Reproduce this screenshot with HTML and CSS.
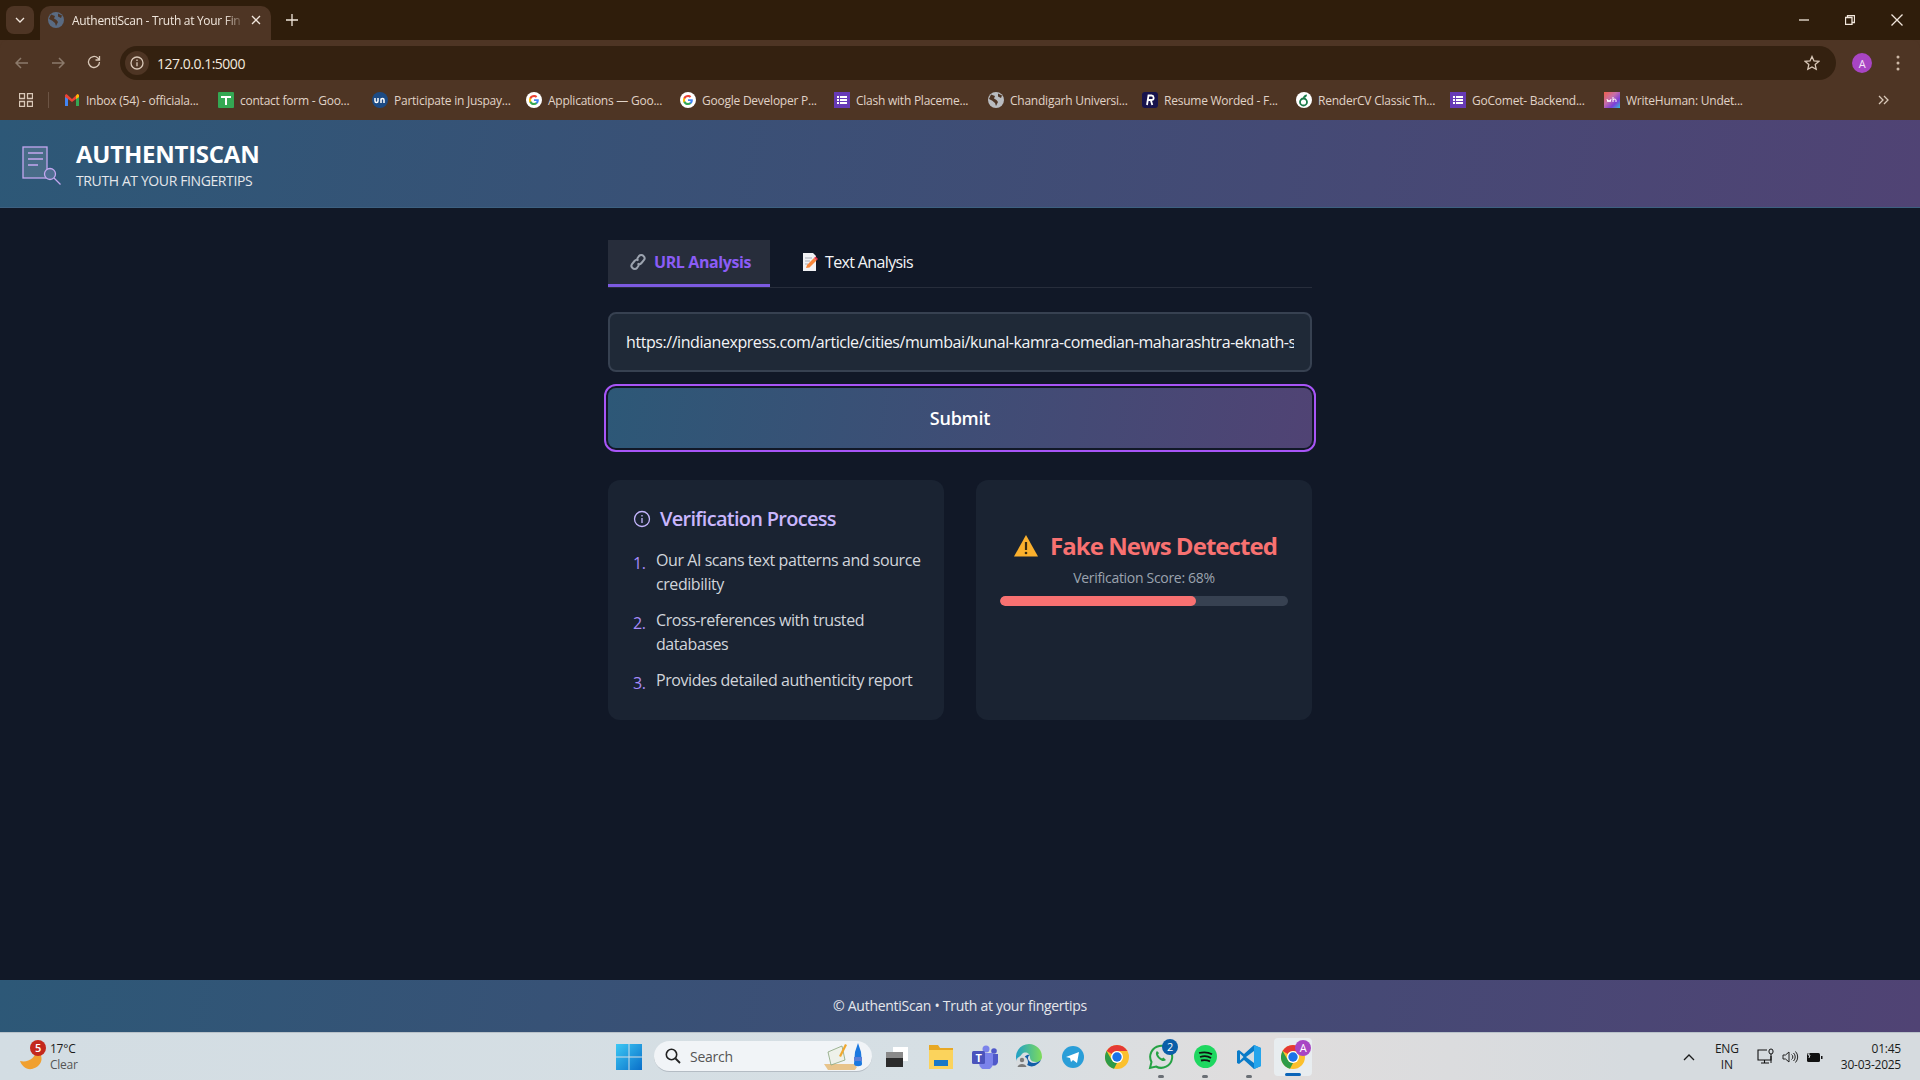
FILE: index.html
```html
<!DOCTYPE html>
<html lang="en">
<head>
<meta charset="utf-8">
<title>AuthentiScan - Truth at Your Fingertips</title>
<link rel="stylesheet" href="styles.css">
</head>
<body>
<svg class="defs" width="0" height="0" aria-hidden="true">
  <symbol id="globe" viewBox="0 0 16 16"><circle cx="8" cy="8" r="8" fill="currentColor"/><path d="M3 2.500 7 4 6 6.500 8.500 8l1.500 2-2 4-1-3L4 8.500 1 7zM10 1.500l4 2-1 2.500-3-1.500z" fill="var(--globe-cut)"/></symbol>
  <symbol id="gicon" viewBox="0 0 16 16"><circle cx="8" cy="8" r="8" fill="#fff"/><path d="M12.800 8.200c0-.4 0-.7-.1-1H8v1.900h2.700c-.1.600-.5 1.100-1 1.500v1.200h1.600c1-.9 1.500-2.200 1.500-3.600z" fill="#4285f4"/><path d="M8 13c1.300 0 2.400-.4 3.300-1.200l-1.600-1.200c-.4.300-1 .5-1.700.5-1.300 0-2.400-.9-2.800-2H3.500v1.300C4.300 12 6 13 8 13z" fill="#34a853"/><path d="M5.200 9.100c-.2-.7-.2-1.400 0-2.100V5.700H3.500c-.7 1.400-.7 3.100 0 4.700z" fill="#fbbc05"/><path d="M8 5c.7 0 1.400.3 1.900.7l1.400-1.400C10.400 3.500 9.300 3 8 3 6 3 4.300 4.100 3.500 5.700L5.200 7c.4-1.200 1.500-2 2.800-2z" fill="#ea4335"/></symbol>
  <symbol id="forms" viewBox="0 0 16 16"><rect width="16" height="20" fill="#673ab7"/><g fill="#fff"><rect x="3" y="4" width="2" height="2"/><rect x="6" y="4" width="7" height="2"/><rect x="3" y="7" width="2" height="2"/><rect x="6" y="7" width="7" height="2"/><rect x="3" y="10" width="2" height="2"/><rect x="6" y="10" width="7" height="2"/></g></symbol>
  <symbol id="chrome" viewBox="0 0 24 24"><circle cx="12" cy="12" r="12" fill="#fbc02d"/><path d="M12 0a12 12 0 0 1 10.400 6H12a6 6 0 0 0-5.200 3L1.600 6A12 12 0 0 1 12 0z" fill="#e53935"/><path d="M1.600 6l5.200 9a6 6 0 0 0 5.200 3l-3 5.700A12 12 0 0 1 1.600 6z" fill="#2e9b48"/><circle cx="12" cy="12" r="6" fill="#fff"/><circle cx="12" cy="12" r="4.700" fill="#1a73e8"/></symbol>
</svg>

<header class="tabstrip">
  <button class="tab-menu"><svg width="10" height="6" viewBox="0 0 10 6"><path d="M1 1l4 4 4-4" class="ln ln-w"/></svg></button>
  <div class="tab">
    <svg class="fav globe-dark" width="16" height="16"><use href="#globe"/></svg>
    <span class="tab-title">AuthentiScan - Truth at Your Fin</span>
    <svg class="tab-x" width="10" height="10" viewBox="0 0 10 10"><path d="M1 1l8 8M9 1l-8 8" class="ln ln-w"/></svg>
  </div>
  <svg class="new-tab" width="12" height="12" viewBox="0 0 12 12"><path d="M6 0v12M0 6h12" class="ln ln-w"/></svg>
  <div class="win-controls">
    <svg width="10" height="10" viewBox="0 0 10 10"><path d="M0 5h10" class="ln ln-w"/></svg>
    <svg width="10" height="10" viewBox="0 0 10 10"><path d="M.5 2.500h6.500v7H.5zM2.500 2.500V.5h7v7H7" class="ln ln-w"/></svg>
    <svg width="12" height="12" viewBox="0 0 12 12"><path d="M.5.5l11 11M11.500.5l-11 11" class="ln ln-w"/></svg>
  </div>
</header>

<div class="chrome-body">
  <nav class="toolbar">
    <svg class="nav-ic" width="14" height="12" viewBox="0 0 14 12"><path d="M13 6H1M6 1 1 6l5 5" class="ln ln-dim"/></svg>
    <svg class="nav-ic" width="14" height="12" viewBox="0 0 14 12"><path d="M1 6h12M8 1l5 5-5 5" class="ln ln-dim"/></svg>
    <svg class="nav-ic" width="14" height="14" viewBox="0 0 14 14"><path d="M12.500 7A5.500 5.500 0 1 1 10.800 3L12.500 4.500M12.500 1v4h-4" class="ln ln-b"/></svg>
    <div class="omnibox">
      <span class="site-info"><svg width="14" height="14" viewBox="0 0 14 14"><circle cx="7" cy="7" r="6" class="ln ln-b"/><path d="M7 6.200v4M7 3.500v1.500" class="ln ln-b"/></svg></span>
      <span class="url">127.0.0.1:5000</span>
      <svg class="star" width="16" height="16" viewBox="0 0 16 16"><path d="M8 1.500l2 4.400 4.800.5-3.600 3.200 1 4.700L8 11.900l-4.200 2.400 1-4.700L1.200 6.400 6 5.900z" class="ln ln-b"/></svg>
    </div>
    <span class="avatar">A</span>
    <svg class="kebab" width="4" height="16" viewBox="0 0 4 16"><circle cx="2" cy="2" r="1.500"/><circle cx="2" cy="8" r="1.500"/><circle cx="2" cy="14" r="1.500"/></svg>
  </nav>
  <nav class="bookmarks">
    <svg class="apps" width="14" height="14" viewBox="0 0 14 14"><path d="M.5.5h5v5h-5zM8.500.5h5v5h-5zM.5 8.500h5v5h-5zM8.500 8.500h5v5h-5z" class="ln ln-b"/></svg>
    <span class="bm-sep"></span>
    <a class="bm"><svg class="fav" width="16" height="16" viewBox="0 0 16 16"><path d="M1 3v11h3V7l4 3 4-3v7h3V3l-1.500-1L8 7 2.500 2z" fill="#ea4335"/><path d="M1 5v9h3V7z" fill="#4285f4"/><path d="M12 7v7h3V5z" fill="#34a853"/><path d="M15 3v2l-3 2V3.500l1.500-1.500z" fill="#fbbc04"/></svg><span>Inbox (54) - officiala...</span></a>
    <a class="bm"><svg class="fav" width="16" height="16" viewBox="0 0 16 16"><rect width="16" height="16" rx="1" fill="#34a853"/><path d="M3 5h10M8 5v8" stroke="#fff" stroke-width="2"/></svg><span>contact form - Goo...</span></a>
    <a class="bm"><svg class="fav" width="16" height="16" viewBox="0 0 16 16"><circle cx="8" cy="8" r="8" fill="#1d4b84"/><path d="M3 6v3a1.500 1.500 0 0 0 3 0V6M9 11V6.500M9 8a1.500 1.500 0 0 1 3 0v3" fill="none" stroke="#fff" stroke-width="1.500"/></svg><span>Participate in Juspay...</span></a>
    <a class="bm"><svg class="fav" width="16" height="16"><use href="#gicon"/></svg><span>Applications — Goo...</span></a>
    <a class="bm"><svg class="fav" width="16" height="16"><use href="#gicon"/></svg><span>Google Developer P...</span></a>
    <a class="bm"><svg class="fav" width="16" height="16" viewBox="0 0 16 16"><use href="#forms" width="16" height="16"/></svg><span>Clash with Placeme...</span></a>
    <a class="bm"><svg class="fav globe-light" width="16" height="16"><use href="#globe"/></svg><span>Chandigarh Universi...</span></a>
    <a class="bm"><svg class="fav" width="16" height="16" viewBox="0 0 16 16"><rect width="16" height="16" rx="3" fill="#17134d"/><path d="M5 13l1.500-9.500h3a2.300 2.300 0 0 1 .5 4.500H6.500M8.800 8l1.500 5" fill="none" stroke="#fff" stroke-width="1.800"/></svg><span>Resume Worded - F...</span></a>
    <a class="bm"><svg class="fav" width="16" height="16" viewBox="0 0 16 16"><circle cx="8" cy="8" r="8" fill="#fff"/><circle cx="7.500" cy="10" r="3.500" fill="none" stroke="#1b7b4a" stroke-width="1.800"/><path d="M7 6c0-2 2-3.500 4-3.500C11 5 9 6.500 7 6z" fill="#1b7b4a"/></svg><span>RenderCV Classic Th...</span></a>
    <a class="bm"><svg class="fav" width="16" height="16" viewBox="0 0 16 16"><use href="#forms" width="16" height="16"/></svg><span>GoComet- Backend...</span></a>
    <a class="bm"><svg class="fav" width="16" height="16" viewBox="0 0 16 16"><defs><linearGradient id="wh" x1="0" y1="0" x2="1" y2="1"><stop offset="0" stop-color="#f0604a"/><stop offset=".4" stop-color="#c76fa8"/><stop offset=".7" stop-color="#7c3fd8"/><stop offset="1" stop-color="#30c0d8"/></linearGradient></defs><rect width="16" height="16" fill="url(#wh)"/><path d="M3 7l1 3 1-2 1 2 1-3M9 5v5M9 8c1-1.500 3-1 3 0v2" fill="none" stroke="#fff"/></svg><span>WriteHuman: Undet...</span></a>
    <svg class="bm-more" width="12" height="10" viewBox="0 0 12 10"><path d="M1 1l4 4-4 4M6 1l4 4-4 4" class="ln ln-b"/></svg>
  </nav>
</div>

<div class="app-header">
  <svg class="logo" width="42" height="42" viewBox="0 0 42 42">
    <rect x="1" y="1" width="24" height="31" fill="#fff" fill-opacity=".13" stroke="#c4a7f0" stroke-width="1.300"/>
    <path d="M6 7h15M6 13h15M6 19h10" stroke="#c4a7f0" stroke-width="1.300" fill="none"/>
    <circle cx="28" cy="28" r="5.500" fill="#4f6f92" stroke="#c4a7f0" stroke-width="1.300"/>
    <path d="M32 32l6.500 6.500" stroke="#c4a7f0" stroke-width="1.300" fill="none"/>
  </svg>
  <div class="brand">
    <h1>AUTHENTISCAN</h1>
    <p>TRUTH AT YOUR FINGERTIPS</p>
  </div>
</div>

<main class="main">
  <div class="container">
    <div class="tabs">
      <button class="app-tab active">
        <svg width="18" height="18" viewBox="0 0 18 18"><g fill="none" stroke="#9ca3af" stroke-width="2"><path d="M8 6l2-3a3 3 0 0 1 4.500 0 3 3 0 0 1 .5 4l-2.500 3a3 3 0 0 1-4 .5"/><path d="M10 12l-2 3a3 3 0 0 1-4.500 0 3 3 0 0 1-.5-4l2.500-3a3 3 0 0 1 4-.5"/></g></svg>
        URL Analysis
      </button>
      <button class="app-tab">
        <svg width="16" height="18" viewBox="0 0 16 18"><path d="M1 0h10l3 3v15H1z" fill="#f1f1f4"/><path d="M3 5h7M3 8h5M3 11h3" stroke="#a9adb8" stroke-width="1"/><path d="M4 15l1-3 7-7 2.500 2.500-7 7z" fill="#f6863a"/><path d="M12 5l1.500-1.500L16 6l-1.500 1.500z" fill="#e8384f"/></svg>
        Text Analysis
      </button>
    </div>
    <input class="url-input" type="text" value="https://indianexpress.com/article/cities/mumbai/kunal-kamra-comedian-maharashtra-eknath-shinde-row-9910432/" readonly>
    <button class="submit">Submit</button>
    <div class="cards">
      <section class="card">
        <h2><svg width="18" height="18" viewBox="0 0 18 18"><circle cx="9" cy="9" r="7.500" fill="none" stroke="#c4b5fd" stroke-width="1.300"/><path d="M9 8v5M9 5v1.500" stroke="#c4b5fd" stroke-width="1.300"/></svg>Verification Process</h2>
        <ol class="steps">
          <li>Our AI scans text patterns and source credibility</li>
          <li>Cross-references with trusted databases</li>
          <li>Provides detailed authenticity report</li>
        </ol>
      </section>
      <section class="card result">
        <h3><svg width="24" height="22" viewBox="0 0 24 22"><path d="M12 0 24 21.500H0z" fill="#fbb02d"/><path d="M12 7v8" stroke="#3a2a10" stroke-width="2.200"/><circle cx="12" cy="18" r="1.300" fill="#3a2a10"/></svg>Fake News Detected</h3>
        <p class="score">Verification Score: 68%</p>
        <div class="bar"><div class="fill" style="width:68%"></div></div>
      </section>
    </div>
  </div>
</main>

<footer class="app-footer">© AuthentiScan • Truth at your fingertips</footer>

<div class="taskbar">
  <div class="weather">
    <svg class="weather-ic" width="24" height="26" viewBox="0 0 24 26"><path d="M16 6c8 4 8 16-4 19-6 1-10-3-12-8 8 2 16-3 16-11z" fill="#f0a030"/></svg>
    <span class="w-badge">5</span>
    <div class="w-text"><span>17°C</span><span class="w-dim">Clear</span></div>
  </div>
  <div class="task-center">
    <span class="cell"><svg width="26" height="26" viewBox="0 0 26 26"><defs><linearGradient id="win" x1="0" y1="0" x2="1" y2="1"><stop offset="0" stop-color="#3cc8f4"/><stop offset="1" stop-color="#0a6fc9"/></linearGradient></defs><path d="M0 0h12.500v12.500H0zM13.500 0H26v12.500H13.500zM0 13.500h12.500V26H0zM13.500 13.500H26V26H13.500z" fill="url(#win)"/></svg></span>
    <div class="search">
      <svg width="16" height="16" viewBox="0 0 16 16"><circle cx="6.500" cy="6.500" r="5.200" fill="none" stroke="#222" stroke-width="1.600"/><path d="M10.500 10.500 15 15" stroke="#222" stroke-width="1.800"/></svg>
      <span>Search</span>
      <svg class="search-art" width="42" height="28" viewBox="0 0 42 28"><path d="M2 22h30l3 3-2 3H6z" fill="#e8c48c"/><path d="M6 10l14-6 3 14-14 5z" fill="#eef1ea" stroke="#7a9a6c" stroke-width=".7"/><path d="M17 14l6-12 2 1-6 12z" fill="#f0a830"/><path d="M33 10l3-9 3 9 1 12c0 3-8 3-8 0z" fill="#1a78e0"/><rect x="32" y="15" width="8" height="4" fill="#5b7fd8"/></svg>
    </div>
    <span class="cell taskview"><svg width="22" height="22" viewBox="0 0 22 22"><rect x="7" y="1" width="15" height="14" fill="#fff"/><rect y="6" width="17" height="15" fill="#2b2b2b"/><rect y="6" width="17" height="6" fill="#8a8a8a"/></svg></span>
    <span class="cell"><svg width="26" height="24" viewBox="0 0 26 24"><path d="M1 0h9l2 3h13v21H1z" fill="#e8a824"/><rect x="1" y="5" width="24" height="19" fill="#fbd35c"/><rect x="6" y="15" width="14" height="6" fill="#1878c8"/></svg></span>
    <span class="cell"><svg width="26" height="24" viewBox="0 0 26 24"><circle cx="14" cy="4" r="3.500" fill="#7b83eb"/><circle cx="22" cy="6" r="2.800" fill="#5059c9"/><path d="M18 9h8v8a4 4 0 0 1-6 3z" fill="#5059c9"/><path d="M7 8h14v10a6 6 0 0 1-14 0z" fill="#7b83eb"/><rect y="6" width="13" height="13" rx="1.500" fill="#4b53bc"/><text x="6.500" y="16.500" class="teams-t">T</text></svg></span>
    <span class="cell"><svg width="26" height="26" viewBox="0 0 26 26"><defs><linearGradient id="edge" x1="0" y1="0" x2="1" y2="0"><stop offset="0" stop-color="#1fa0c8"/><stop offset="1" stop-color="#7fdc5a"/></linearGradient></defs><path d="M13 0a13 13 0 0 1 13 13c0 3-3 5-6 5-5 0-6-3-6-5 0-4-5-6-8-3-2 2-4 5-5 8A13 13 0 0 1 13 0z" fill="url(#edge)"/><path d="M8 17c2 5 8 7 12 4 2-1 4-3 5-5-3 3-11 5-13-1 0-2 0-3 2-4-3-1-7 2-6 6z" fill="#115ea8"/><circle cx="6" cy="18" r="6" fill="#d8dcdf"/><circle cx="6" cy="16" r="2.200" fill="#7a7a7a"/><path d="M1.500 23c1-4 8-4 9 0z" fill="#7a7a7a"/></svg></span>
    <span class="cell"><svg width="22" height="22" viewBox="0 0 22 22"><circle cx="11" cy="11" r="11" fill="#2a9ed8"/><path d="M4 11l13-5-2 11-4-3-2 2-1-4z" fill="#fff"/></svg></span>
    <span class="cell"><svg width="24" height="24"><use href="#chrome"/></svg></span>
    <span class="cell"><svg width="26" height="26" viewBox="0 0 26 26"><path d="M2 24l1.500-6A11 11 0 1 1 8 22.500z" fill="none" stroke="#25a244" stroke-width="2"/><path d="M9 7c-2 2-1 5 1.500 7.500S16 18 18 16l-2.500-2.500-1.500 1c-2-1-3-2-4-4l1-1.500z" fill="#25a244"/></svg><span class="t-badge">2</span><i class="run-dot"></i></span>
    <span class="cell"><svg width="23" height="23" viewBox="0 0 23 23"><circle cx="11.500" cy="11.500" r="11.500" fill="#1ed760"/><path d="M5 8c4-1 9-1 13 1.200M6 12c3-1 8-1 11 1M7 15.500c3-.7 6-.5 9 .8" fill="none" stroke="#111" stroke-width="1.800"/></svg><i class="run-dot"></i></span>
    <span class="cell"><svg width="24" height="24" viewBox="0 0 24 24"><path d="M17 0l7 3v18l-7 3-10-9-5 4-2-1V6l2-1 5 4z" fill="#0a7bc8"/><path d="M17 0l7 3v18l-7 3z" fill="#25a5ec"/><path d="M17 6 9 12l8 6z" fill="#d5dde2"/><path d="M3 8.500v7l3.500-3.500z" fill="#d5dde2"/></svg><i class="run-dot"></i></span>
    <span class="cell active-cell"><svg width="24" height="24"><use href="#chrome"/></svg><span class="a-badge">A</span><i class="run-bar"></i></span>
  </div>
  <div class="tray">
    <svg class="tray-up" width="12" height="8" viewBox="0 0 12 8"><path d="M1 7l5-5 5 5" fill="none" stroke="#1b1b1b" stroke-width="1.300"/></svg>
    <div class="lang"><span>ENG</span><span>IN</span></div>
    <div class="tray-icons">
      <svg width="18" height="18" viewBox="0 0 18 18"><path d="M10 2H1v10h13V8M4 15h8M7.500 12v3" fill="none" stroke="#111" stroke-width="1.100"/><rect x="12" y="1" width="4" height="5" rx="2" fill="none" stroke="#111"/><path d="M14 6v9" stroke="#111"/></svg>
      <svg width="17" height="14" viewBox="0 0 17 14"><path d="M1 5h2.500L7 2v10L3.500 9H1zM9.500 4.500a3 3 0 0 1 0 5M11.500 3a5.500 5.500 0 0 1 0 8M13.500 1.500a8 8 0 0 1 0 11" fill="none" stroke="#222"/></svg>
      <svg width="17" height="13" viewBox="0 0 17 13"><rect x="1" y="3" width="13" height="9" rx="1.500" fill="#111"/><rect x="15" y="6" width="1.500" height="3" fill="#111"/><path d="M5 0 2 5h2L3 8" fill="none" stroke="#d6dbdf"/></svg>
    </div>
    <div class="clock"><span>01:45</span><span>30-03-2025</span></div>
  </div>
</div>
</body>
</html>
```
FILE: styles.css
```css
* { box-sizing: border-box; }
html, body { margin: 0; height: 100%; }
body {
  height: 1080px;
  overflow: hidden;
  display: flex;
  flex-direction: column;
  background: #111827;
  font-family: "Open Sans", "Noto Sans", sans-serif;
  letter-spacing: -0.015em;
  color: #fff;
}
button, input { font-family: inherit; letter-spacing: inherit; }
.defs { position: absolute; }
.ln { fill: none; stroke-width: 1.300; }
.ln-w { stroke: #f1e6dc; }
.ln-dim { stroke: #8c7a6b; stroke-width: 1.500; }
.ln-b { stroke: #d9c8b8; stroke-width: 1.300; }
.globe-dark { color: #5a6b82; --globe-cut: #4e3524; }
.globe-light { color: #b9bcc0; --globe-cut: #4e3524; }

/* browser chrome */
.tabstrip {
  height: 40px;
  flex: none;
  background: #2f1d0b;
  display: flex;
  align-items: flex-end;
  padding-left: 6px;
}
.tab-menu {
  width: 28px; height: 28px;
  margin-bottom: 6px;
  border: 0; padding: 0;
  border-radius: 8px;
  background: #4e3524;
  display: flex; align-items: center; justify-content: center;
}
.tab {
  width: 231px; height: 34px;
  margin-left: 6px;
  background: #4e3524;
  border-radius: 10px 10px 0 0;
  display: flex; align-items: center;
  padding: 0 10px 6px 8px;
  font-size: 12px;
  color: #f0e6dc;
}
.tab .fav { margin-right: 8px; }
.tab-title {
  flex: 1;
  overflow: hidden;
  white-space: nowrap;
  letter-spacing: -0.025em;
  -webkit-mask-image: linear-gradient(90deg, #000 88%, transparent);
  mask-image: linear-gradient(90deg, #000 88%, transparent);
}
.tab-x { margin-left: 6px; }
.new-tab { margin: 0 0 14px 15px; }
.win-controls {
  margin-left: auto;
  height: 40px;
  display: flex; align-items: center;
  gap: 36px;
  padding-right: 17px;
}

.chrome-body { flex: none; background: #4e3524; }
.toolbar {
  height: 40px;
  display: flex; align-items: flex-end;
  padding-left: 15px;
  border-radius: 8px 8px 0 0;
  background: #4e3524;
}
.nav-ic { margin: 0 22px 11px 0; flex: none; }
.nav-ic + .nav-ic + .nav-ic { margin-right: 19px; }
.omnibox {
  width: 1716px; height: 34px;
  background: #342110;
  border-radius: 17px;
  display: flex; align-items: center;
  padding: 0 16px 0 5px;
  font-size: 14px;
  color: #f3e9df;
}
.site-info {
  width: 24px; height: 24px;
  border-radius: 50%;
  background: #4e3524;
  display: flex; align-items: center; justify-content: center;
  margin-right: 8px;
}
.url { flex: 1; letter-spacing: -0.035em; }
.avatar {
  width: 20px; height: 20px;
  margin: 0 0 7px 16px;
  border-radius: 50%;
  background: #a845c4;
  color: #f4e5f8;
  font-size: 11px;
  display: flex; align-items: center; justify-content: center;
}
.kebab { margin: 0 0 9px 24px; fill: #cdb8a6; }
.bookmarks {
  height: 40px;
  display: flex; align-items: center;
  padding-left: 19px;
  font-size: 12px;
  color: #e0d3c7;
}
.apps { flex: none; }
.bm-sep { width: 1px; height: 16px; background: #6c5444; margin: 0 15px 0 15px; flex: none; }
.bm {
  width: 154px; flex: none;
  display: flex; align-items: center;
  gap: 6px;
  white-space: nowrap;
}
.bm-more { margin-left: auto; margin-right: 30px; flex: none; }

/* app */
.app-header {
  height: 88px;
  flex: none;
  display: flex; align-items: center;
  gap: 12px;
  padding: 0 24px;
  background: linear-gradient(100deg, #2d5877, #504374);
  border-bottom: 1px solid #3d6080;
}
.logo { flex: none; margin-top: 7px; margin-left: -2px; }
.brand h1 { margin: 0; font-size: 24px; line-height: 32px; font-weight: 700; }
.brand p { margin: 1px 0 -1px; font-size: 14px; line-height: 20px; color: #e5e7eb; letter-spacing: -0.028em; }

.main { flex: 1; padding-top: 32px; }
.container { width: 704px; margin: 0 auto; }
.tabs { display: flex; border-bottom: 1px solid #272d3b; height: 48px; }
.app-tab {
  height: 47px;
  padding: 0 20px;
  margin-left: 12px;
  display: flex; align-items: center; gap: 7px;
  background: none;
  border: 0;
  border-bottom: 3px solid transparent;
  color: #f3f4f6;
  font-size: 16px;
  font-weight: 500;
  letter-spacing: -0.04em;
}
.app-tab.active {
  width: 162px;
  margin-left: 0;
  background: #272d3b;
  border-bottom-color: #7c5ae0;
  color: #8b5cf6;
  font-weight: 700;
  padding: 0 18px 0 21px;
  gap: 7px;
  letter-spacing: -0.025em;
}
.url-input {
  display: block;
  width: 100%; height: 60px;
  margin-top: 24px;
  padding: 0 16px;
  background: #1f2937;
  border: 2px solid #374151;
  border-radius: 8px;
  color: #f3f4f6;
  font-size: 16px;
  letter-spacing: -0.027em;
  outline: none;
}
.submit {
  display: block;
  width: 100%; height: 60px;
  margin-top: 16px;
  border: 0;
  border-radius: 8px;
  background: linear-gradient(100deg, #2d5877, #504374);
  color: #fff;
  font-size: 18px;
  font-weight: 600;
  outline: 2px solid #a855f7;
  outline-offset: 2px;
}
.cards { display: grid; grid-template-columns: 336px 336px; gap: 32px; margin-top: 32px; }
.card {
  height: 240px;
  background: #1a2332;
  border-radius: 12px;
  padding: 24px;
}
.card h2 {
  margin: 1px 0 15px 1px;
  display: flex; align-items: center; gap: 9px;
  font-size: 20px; line-height: 28px; font-weight: 600;
  letter-spacing: -0.036em;
  color: #c9b6fd;
}
.steps {
  margin: 0 -8px 0 0; padding: 0;
  list-style: none;
  counter-reset: step;
  font-size: 16px; line-height: 24px;
  letter-spacing: -0.027em;
  color: #d1d5db;
}
.steps li { display: flex; margin-bottom: 12px; counter-increment: step; }
.steps li:last-child { margin-bottom: 0; }
.steps li::before {
  content: counter(step) ".";
  flex: none;
  width: 23px;
  padding: 3px 0 0 1px;
  color: #a78bfa;
}
.result { text-align: center; }
.result h3 {
  margin: 26px 0 0;
  padding-left: 3px;
  display: flex; align-items: center; justify-content: center; gap: 12px;
  font-size: 24px; line-height: 32px; font-weight: 700;
  letter-spacing: -0.04em;
  color: #f87171;
}
.score { margin: 6px 0 0; font-size: 14px; line-height: 20px; color: #9ca3af; letter-spacing: -0.022em; }
.bar { height: 10px; margin-top: 8px; background: #374151; border-radius: 5px; overflow: hidden; }
.fill { height: 100%; background: #f87171; border-radius: 5px; }

.app-footer {
  height: 52px; flex: none;
  display: flex; align-items: center; justify-content: center;
  padding-bottom: 1px;
  background: linear-gradient(100deg, #2d5877, #504374);
  font-size: 14px;
  letter-spacing: -0.02em;
  color: #e5e7eb;
}

/* taskbar */
.taskbar {
  height: 48px; flex: none;
  display: flex; align-items: center;
  position: relative;
  background: linear-gradient(90deg, #d3dde3, #d6dfe4 50%, #e0dddd 66%, #d6dbdf 85%);
  color: #1b1b1b;
  font-size: 12px;
  border-top: 1px solid #b9c2c9;
}
.weather { width: 607px; flex: none; display: flex; align-items: center; padding-left: 20px; position: relative; }
.weather-ic { flex: none; }
.w-badge {
  position: absolute; left: 30px; top: -1px;
  width: 16px; height: 16px;
  border-radius: 50%;
  background: #c4281c; color: #fff;
  font-size: 11px; font-weight: 600;
  display: flex; align-items: center; justify-content: center;
}
.w-text { display: flex; flex-direction: column; margin-left: 6px; line-height: 16px; }
.w-dim { color: #555; }
.task-center { display: flex; align-items: center; }
.cell {
  width: 44px; height: 44px;
  flex: none;
  position: relative;
  display: flex; align-items: center; justify-content: center;
}
.search {
  width: 218px; height: 31px;
  margin: 0 0 0 3px;
  display: flex; align-items: center;
  padding: 0 6px 0 11px;
  border-radius: 16px;
  background: #f1f4f7;
  border-bottom: 1px solid #b4bcc4;
  color: #555;
  font-size: 14px;
}
.search span { margin-left: 9px; flex: 1; }
.search-art { margin-right: 2px; }
.taskview { margin-left: 3px; }
.teams-t { fill: #fff; font-size: 11px; font-weight: 700; text-anchor: middle; }
.t-badge, .a-badge {
  position: absolute;
  width: 16px; height: 16px;
  border-radius: 50%;
  color: #fff; font-size: 11px;
  display: flex; align-items: center; justify-content: center;
}
.t-badge { background: #0a5ea8; right: 5px; top: 4px; }
.a-badge { background: #a845c4; right: 1px; top: 2px; }
.run-dot { position: absolute; bottom: 1px; left: 19px; width: 6px; height: 3px; border-radius: 2px; background: #6a6f75; }
.run-bar { position: absolute; bottom: 0; left: 11px; width: 16px; height: 3px; border-radius: 2px; background: #0a64b8; }
.active-cell { background: #e8edf0; border-radius: 4px; width: 38px; height: 38px; margin-left: 3px; }
.tray { flex: 1; display: flex; align-items: center; padding-right: 19px; }
.tray-up { margin-left: auto; }
.lang { display: flex; flex-direction: column; align-items: center; line-height: 16px; width: 38px; margin-left: 13px; }
.tray-icons { display: flex; align-items: center; gap: 7px; margin-left: 11px; }
.clock { display: flex; flex-direction: column; align-items: flex-end; line-height: 16px; margin-left: 18px; }
```
